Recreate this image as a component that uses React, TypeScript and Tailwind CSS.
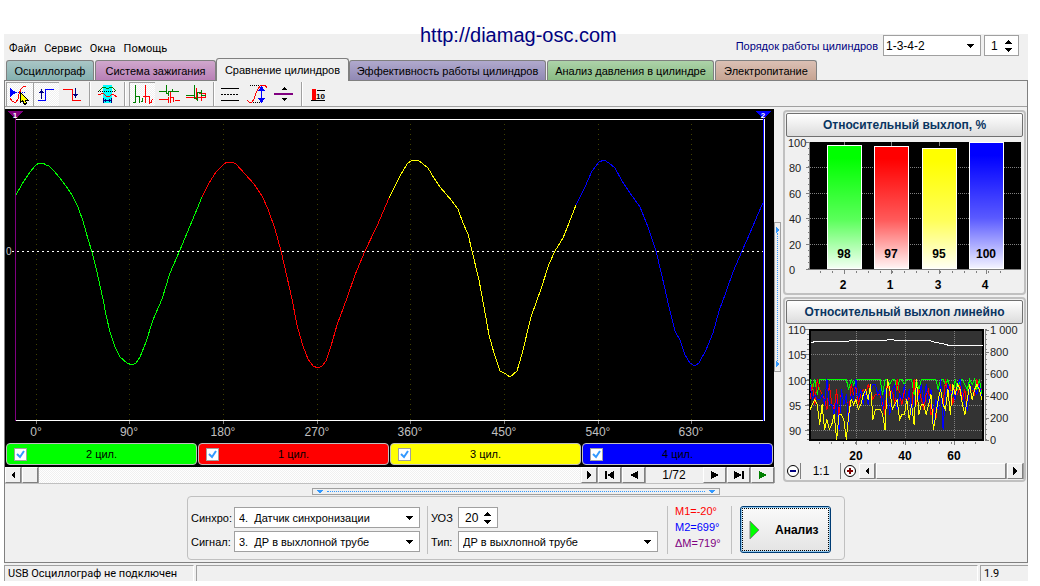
import { type ReactNode, useState } from "react";

type Point = [number, number];

const tabs = [
  { label: "Осциллограф", width: "w-[88px]", color: "from-[#a9c6c6] to-[#84b0af]" },
  { label: "Система зажигания", width: "w-[121px]", color: "from-[#d0a7cd] to-[#b880b6]" },
  { label: "Сравнение цилиндров", width: "w-[133px]", color: "" },
  { label: "Эффективность работы цилиндров", width: "w-[197px]", color: "from-[#b0a9cd] to-[#9189b4]" },
  { label: "Анализ давления в цилиндре", width: "w-[167px]", color: "from-[#add3a9] to-[#8abb84]" },
  { label: "Электропитание", width: "w-[102px]", color: "from-[#dbc0b4] to-[#c6a493]" },
];

const waves: { color: string; points: Point[] }[] = [
  {
    color: "#00ff00",
    points: [
      [16, 195], [22, 184], [26, 178], [30, 172], [36, 165], [39, 163], [43, 163], [46, 165], [49, 166],
      [53, 170], [60, 178], [66, 186], [72, 195], [78, 207], [83, 221], [88, 239], [92, 252],
      [97, 272], [103, 299], [106, 315], [110, 332], [115, 347], [120, 357], [127, 363], [132, 365],
      [136, 363], [140, 357], [146, 342], [153, 320], [162, 299], [170, 273], [180, 250],
      [190, 226], [202, 197],
    ],
  },
  {
    color: "#ff0000",
    points: [
      [202, 197], [209, 183], [216, 172], [223, 165], [227, 162], [232, 162], [236, 164], [245, 174], [254, 184],
      [262, 196], [268, 209], [275, 229], [281, 251], [287, 277], [292, 299], [297, 325], [303, 346],
      [308, 359], [313, 366], [318, 368], [322, 366], [326, 361], [331, 346], [337, 325], [347, 298],
      [355, 275], [365, 251], [377, 226], [389, 198],
    ],
  },
  {
    color: "#ffff00",
    points: [
      [389, 198], [400, 176], [407, 164], [412, 160], [418, 160], [428, 168], [434, 178], [440, 187],
      [452, 201], [458, 209], [463, 223], [468, 234], [472, 251], [479, 280], [484, 307], [489, 335],
      [494, 353], [500, 371], [506, 374], [510, 377], [517, 371], [522, 354], [531, 317], [541, 289],
      [549, 264], [555, 251], [563, 238], [569, 223], [576, 205],
    ],
  },
  {
    color: "#0000ff",
    points: [
      [576, 205], [585, 187], [592, 171], [599, 162], [604, 160], [609, 163], [615, 168], [622, 181],
      [630, 193], [640, 207], [648, 227], [656, 251], [662, 276], [669, 307], [675, 331], [680, 340],
      [685, 355], [690, 363], [695, 366], [699, 363], [706, 350], [713, 333], [719, 311], [726, 292],
      [733, 272], [742, 251], [750, 233], [758, 214], [763, 203],
    ],
  },
];

const degrees = [
  { x: 36, label: "0°" },
  { x: 129, label: "90°" },
  { x: 223, label: "180°" },
  { x: 317, label: "270°" },
  { x: 410, label: "360°" },
  { x: 504, label: "450°" },
  { x: 598, label: "540°" },
  { x: 691, label: "630°" },
];

const cylinders = [
  { name: "2 цил.", color: "bg-[#00ff00]" },
  { name: "1 цил.", color: "bg-[#ff0000]" },
  { name: "3 цил.", color: "bg-[#ffff00]" },
  { name: "4 цил.", color: "bg-[#0000ff]" },
];

const exhaust = [
  { id: "2", value: 98, color: "#00ff00", x: 827, top: 145 },
  { id: "1", value: 97, color: "#ff0000", x: 874, top: 146 },
  { id: "3", value: 95, color: "#ffff00", x: 922, top: 148 },
  { id: "4", value: 100, color: "#0000ff", x: 969, top: 142 },
];

const history = [
  {
    color: "#00ff00",
    values: [
      100, 98, 100, 97, 100, 100, 100, 100, 100, 100, 100, 100, 100, 100, 100, 100, 98, 100, 99, 100, 100, 100,
      100, 100, 100, 100, 100, 100, 100, 100, 97, 100, 100, 99, 100, 100, 98, 100, 100, 99, 100, 100, 100, 97,
      100, 98, 100, 100, 100, 100, 100, 100, 100, 98, 100, 100, 99, 100, 98, 97, 100, 98, 100, 100, 99, 98,
      100, 99, 100, 98, 100, 97,
    ],
  },
  {
    color: "#ff0000",
    values: [
      96, 99, 95, 100, 98, 97, 96, 94, 99, 95, 94, 98, 92, 98, 95, 97, 92, 99, 97, 99, 95, 97, 98, 97, 99, 98,
      96, 97, 97, 97, 95, 93, 100, 97, 98, 95, 100, 97, 95, 98, 95, 97, 94, 100, 95, 98, 96, 94, 97, 98, 93,
      94, 92, 96, 98, 95, 100, 97, 99, 95, 98, 97, 99, 96, 98, 94, 99, 98, 97, 100, 98, 98,
    ],
  },
  {
    color: "#0000ff",
    values: [
      99, 96, 97, 96, 96, 97, 95, 100, 95, 95, 93, 96, 90, 98, 95, 97, 91, 97, 96, 100, 96, 98, 95, 98, 95, 98,
      99, 99, 97, 98, 94, 98, 96, 93, 98, 99, 94, 97, 96, 99, 95, 98, 93, 96, 98, 96, 99, 95, 99, 95, 98, 91,
      96, 94, 100, 90, 97, 99, 97, 98, 96, 99, 100, 97, 95, 94, 99, 98, 98, 97, 99, 96,
    ],
  },
  {
    color: "#ffff00",
    values: [
      94, 95, 96, 95, 91, 95, 90, 92, 90, 91, 93, 88, 93, 93, 92, 88, 93, 96, 95, 96, 94, 95, 97, 98, 96, 99,
      92, 94, 94, 94, 93, 90, 100, 98, 94, 95, 96, 92, 93, 93, 96, 92, 95, 91, 100, 93, 95, 95, 93, 95, 97,
      90, 93, 96, 98, 95, 94, 98, 93, 99, 97, 99, 98, 95, 93, 96, 99, 96, 98, 99, 98, 96,
    ],
  },
];

const rpm: Point[] = [
  [811, 343], [816, 341], [849, 341], [852, 340], [887, 340], [891, 339], [897, 341], [903, 340], [928, 340],
  [934, 342], [944, 344], [951, 346], [955, 345], [961, 346], [970, 345], [980, 346], [983, 345],
];

const toPoints = (points: Point[]) => points.map((p) => p.join(",")).join(" ");

function Glyph({ box, d, fill = "#000" }: { box: string; d: string; fill?: string }) {
  const [, , w, h] = box.split(" ");
  return (
    <svg width={w} height={h} viewBox={box} shapeRendering="crispEdges" aria-hidden="true">
      <path d={d} fill={fill} />
    </svg>
  );
}

function ClassicButton({ label, width, children }: { label: string; width: string; children?: ReactNode }) {
  return (
    <button
      aria-label={label}
      className={`flex h-4 shrink-0 items-center justify-center border border-t-white border-l-white border-r-[#808080] border-b-[#808080] bg-[#f0f0f0] shadow-[1px_0_0_#a0a0a0] ${width}`}
    >
      {children}
    </button>
  );
}

function ToolButton({
  label,
  box,
  pressed,
  children,
}: {
  label: string;
  box: string;
  pressed?: boolean;
  children: ReactNode;
}) {
  const [, , w, h] = box.split(" ");
  return (
    <button
      aria-label={label}
      aria-pressed={pressed}
      className={
        pressed
          ? "bg-[repeating-conic-gradient(#fff_0_25%,#f0f0f0_0_50%)] bg-[size:2px_2px] shadow-[inset_1px_1px_0_#a0a0a0]"
          : ""
      }
    >
      <svg width={w} height={h} viewBox={box} fill="none" shapeRendering="crispEdges">
        {children}
      </svg>
    </button>
  );
}

function ToolSeparator() {
  return <div className="h-6 w-0.5 border-l border-[#a0a0a0] bg-white" />;
}

function Toolbar() {
  return (
    <div className="flex h-[26px] items-end border-b border-[#a0a0a0] bg-[#f0f0f0] pl-px">
      <ToolButton label="Измерение" box="6 82 27 24" pressed>
        <path d="M10 88v9l6-4.500z" fill="#0000ff" />
        <path d="M16 92.500h10" stroke="#0000ff" strokeDasharray="1 1" />
        <path d="M10 98l2 3 2 1h2l2-3 1-5 2-5 2-2 3-1" stroke="#ff0000" />
        <path d="M20.500 92.500v10l2-2 2 4 2-1-1.500-3.500h3z" fill="#ffff00" stroke="#000" />
      </ToolButton>
      <ToolButton label="Фронт вверх" box="33 82 26 24" pressed>
        <path d="M38 100.500h7.500v-11h8.500" stroke="#0000ff" />
        <path d="M41.500 99v-9" stroke="#000080" />
        <path d="M39 93h5l-2.500-4z" fill="#000080" />
      </ToolButton>
      <ToolButton label="Фронт вниз" box="59 82 27 24">
        <path d="M63 89.500h9.500v10.500h8" stroke="#ff0000" />
        <path d="M75.500 88v9" stroke="#000080" />
        <path d="M73 94h5l-2.500 4z" fill="#000080" />
      </ToolButton>
      <div className="w-[3px]" />
      <ToolSeparator />
      <ToolButton label="Диапазон" box="91 82 33 24">
        <path d="M103 85h9v18h-9z" fill="#00ffff" />
        <path d="M98 92l3-3 2-2h2l2 2 2-1 2-1 2 1 3 3" stroke="#008000" />
        <path d="M98 91.500h18" stroke="#000" strokeDasharray="1 1" />
        <path d="M98 95l3-1 2-1 3 3 2 1 2-1 2-2 2 1 3 2" stroke="#ff0000" />
        <path d="M103.500 98v5M111.500 98v5M104 100.500h7" stroke="#000080" />
        <path d="M104 100.500l2-2v4zM111 100.500l-2-2v4z" fill="#000080" />
      </ToolButton>
      <ToolSeparator />
      <div className="w-[3px]" />
      <ToolButton label="Последовательно" box="129 82 26 24" pressed>
        <path d="M135.500 85v18M133 102.500h3M136 96.500h4M139.500 96v7M139 98.500h1M141 101.500h2M142.500 98v4" stroke="#008000" />
        <path d="M145.500 85v18M143 96.500h7M149.500 96v8M150 102.500h1M151.500 100v3M152 99.500h1" stroke="#ff0000" />
      </ToolButton>
      <ToolButton label="Раздельно" box="155 82 27 24">
        <path d="M159 91.500h7M166.500 85v9M167 93.500h2M168.500 91v5M169 91.500h4M172.500 89v3M172 91.500h7" stroke="#008000" />
        <path d="M159 99.500h9M168.500 97v6M170.500 92v11M170 97.500h4M173.500 97v5M175 100.500h5" stroke="#ff0000" />
      </ToolButton>
      <ToolButton label="Наложение" box="182 82 28 24">
        <path d="M186 97.500h20M196.500 88v12M201.500 93v8M199 93.500h6M205.500 93v4" stroke="#ff0000" />
        <path d="M186 95.500h9M194.500 85v14M195 98.500h2M197.500 92v9M198 92.500h4M201.500 90v6M202 95.500h4" stroke="#008000" />
      </ToolButton>
      <div className="w-[3px]" />
      <ToolSeparator />
      <ToolButton label="Сетка" box="216 82 30 24">
        <path d="M222 88.500h18M222 100.500h18" stroke="#000" />
        <path d="M222 94.500h18" stroke="#000" strokeDasharray="2 1" />
      </ToolButton>
      <ToolButton label="Амплитуда" box="246 82 26 24">
        <path d="M251 85.500h10M252 102.500h10" stroke="#000" strokeDasharray="1 1" />
        <path d="M248 100l2 2h3l2-3 2-6 2-4 2-3 2-1h3l2 3" stroke="#ff0000" />
        <path d="M262.500 89v11" stroke="#0000ff" />
        <path d="M259 91h7l-3.500-5zM259 98h7l-3.500 5z" fill="#0000ff" />
      </ToolButton>
      <ToolButton label="По центру" box="272 82 28 24">
        <path d="M275 93h19v2h-19z" fill="#800080" />
        <path d="M282 90h6l-3-3zM282 98h6l-3 3z" fill="#000" />
      </ToolButton>
      <div className="w-0.5" />
      <ToolSeparator />
      <ToolButton label="Усреднение" box="304 82 30 24">
        <path d="M313 89h4v11h-4z" fill="#ff0000" />
        <path d="M312 100.500h14M318 90.500h8" stroke="#000" />
        <text x="317" y="99" fontSize="8" fontWeight="700" fill="#000">
          10
        </text>
      </ToolButton>
    </div>
  );
}

function ScopePlot() {
  return (
    <svg viewBox="5 109 769 333" className="block h-auto w-full bg-black" shapeRendering="crispEdges">
      {degrees.map((d) => (
        <g key={d.label}>
          <path d={`M${d.x + 0.5} 124V420`} stroke="#404000" strokeDasharray="1 4" />
          <path d={`M${d.x + 0.5} 421v3`} stroke="#808080" />
          <text x={d.x} y="436" fontSize="12" textAnchor="middle" fill="#c0c0c0">
            {d.label}
          </text>
        </g>
      ))}
      <text x="6" y="255" fontSize="10" fill="#c0c0c0">
        0
      </text>
      <path d="M12 251.500H763" stroke="#fff" strokeDasharray="2 3" />
      <path d="M16 119.500H764.500V420.500H16" fill="none" stroke="#fff" />
      {waves.map((w) => (
        <polyline key={w.color} points={toPoints(w.points)} fill="none" stroke={w.color} />
      ))}
      <path d="M15.500 118V421" stroke="#800080" />
      <path d="M763.500 118V421" stroke="#0000ff" />
      <path d="M8 111h15l-7.500 8z" fill="#800080" />
      <path d="M756 111h15l-7.500 8z" fill="#0000ff" />
      <text x="15" y="118" fontSize="8" fontWeight="700" textAnchor="middle" fill="#fff">
        1
      </text>
      <text x="763" y="118" fontSize="8" fontWeight="700" textAnchor="middle" fill="#fff">
        2
      </text>
    </svg>
  );
}

function CylinderToggles() {
  return (
    <div className="grid grid-cols-4 gap-px bg-black pt-px pr-px pb-0.5 pl-px">
      {cylinders.map((c) => (
        <label
          key={c.name}
          className={`grid h-[22px] grid-cols-[13px_1fr_13px] items-center rounded-sm border border-[#c0c0c0] px-[7px] text-center ${c.color}`}
        >
          <span className="relative block size-[13px]">
            <input
              type="checkbox"
              defaultChecked
              className="peer block size-[13px] appearance-none border border-[#a0a0a0] bg-white"
            />
            <svg
              viewBox="0 0 13 13"
              className="pointer-events-none absolute inset-0 hidden peer-checked:block"
              fill="none"
            >
              <path d="M3 6l3 3 4-6" stroke="#3399ff" strokeWidth="2" />
            </svg>
          </span>
          {c.name}
        </label>
      ))}
    </div>
  );
}

function ScopeScroll() {
  return (
    <div className="flex h-[17px] gap-px border-b border-[#c0c0c0]">
      <ClassicButton label="Влево" width="w-4">
        <Glyph box="0 0 5 8" d="M0 4l4-4v8z" />
      </ClassicButton>
      <ClassicButton label="Бегунок" width="w-4" />
      <div className="flex-1 bg-[repeating-conic-gradient(#fff_0_25%,#f0f0f0_0_50%)] bg-[size:2px_2px]" />
      <ClassicButton label="Вправо" width="w-4">
        <Glyph box="0 0 5 8" d="M4 4l-4-4v8z" />
      </ClassicButton>
      <ClassicButton label="Первый" width="w-[23px]">
        <Glyph box="0 0 10 8" d="M0 0h2v8h-2zM2 4l7-4v8z" />
      </ClassicButton>
      <ClassicButton label="Назад" width="w-[23px]">
        <Glyph box="0 0 8 8" d="M0 4l8-4v8z" />
      </ClassicButton>
      <output className="w-14 text-center text-xs leading-4">1/72</output>
      <ClassicButton label="Вперёд" width="w-[23px]">
        <Glyph box="0 0 8 8" d="M8 4l-8-4v8z" />
      </ClassicButton>
      <ClassicButton label="Последний" width="w-[23px]">
        <Glyph box="0 0 10 8" d="M8 0h2v8h-2zM8 4l-8-4v8z" />
      </ClassicButton>
      <ClassicButton label="Пуск" width="w-[23px]">
        <Glyph box="0 0 8 8" d="M8 4l-8-4v8z" fill="#008000" />
      </ClassicButton>
    </div>
  );
}

function ChartPanel({ title, children }: { title: string; children: ReactNode }) {
  return (
    <section className="rounded-[4px] border-2 border-[#c0c0c0] pt-px">
      <button className="mx-px flex h-6 w-[calc(100%-2px)] items-center justify-center rounded-[2px] border border-[#707070] bg-linear-to-b from-white to-[#dcdcdc] text-xs font-bold text-[#0a3561]">
        {title}
      </button>
      {children}
    </section>
  );
}

function ExhaustBars() {
  return (
    <svg viewBox="785 137 239 156" className="block h-auto w-full overflow-visible" shapeRendering="crispEdges">
      <path d="M810 142h211v128h-211z" fill="#000" />
      {[0, 20, 40, 60, 80, 100].map((v) => {
        const y = Math.round(269 - v * 1.27);
        return (
          <g key={v}>
            {v > 0 && v < 100 && <path d={`M810 ${y + 0.5}h211`} stroke="#808080" strokeDasharray="1 1" />}
            <path d={`M806 ${y + 0.5}h4`} stroke="#808080" />
            <text x={v === 100 ? 788 : 789} y={y + 5} fontSize="11" fill="#222">
              {v}
            </text>
          </g>
        );
      })}
      <path d="M809.500 142v128M808 269.500h213" stroke="#808080" />
      <path d="M808.500 142v127" stroke="#808080" strokeDasharray="1 5" />
      <path d="M820 271.500h192" stroke="#808080" strokeWidth="2" strokeDasharray="1 11" />
      {exhaust.map((b) => (
        <g key={b.id}>
          <linearGradient id={`bar-${b.id}`} x1="0" y1="0" x2="0" y2="1">
            <stop offset="0.1" stopColor={b.color} />
            <stop offset="0.6" stopColor={b.color} stopOpacity="0.65" />
            <stop offset="1" stopColor={b.color} stopOpacity="0.05" />
          </linearGradient>
          <path d={`M${b.x + 17.5} 142v4M${b.x + 17.5} 270v4`} stroke="#808080" />
          <rect x={b.x} y={b.top} width="35" height={269 - b.top} fill="#fff" />
          <rect x={b.x + 1} y={b.top + 1} width="33" height={267 - b.top} fill={`url(#bar-${b.id})`} />
          <text x={b.x + 17} y="258" fontSize="12" fontWeight="700" textAnchor="middle">
            {b.value}
          </text>
          <text x={b.x + 16} y="289" fontSize="12" fontWeight="700" textAnchor="middle">
            {b.id}
          </text>
        </g>
      ))}
    </svg>
  );
}

function ExhaustHistory() {
  return (
    <svg viewBox="785 324 239 138" className="block h-auto w-full overflow-visible" shapeRendering="crispEdges">
      <rect x="810" y="330" width="173" height="110" fill="#333" stroke="#000" strokeWidth="2" />
      {[110, 105, 100, 95, 90].map((v) => {
        const y = Math.round(329 + (110 - v) * 5.05);
        return (
          <g key={v}>
            {v < 110 && <path d={`M811 ${y + 0.5}h171`} stroke="#808080" strokeDasharray="1 1" />}
            <path d={`M805 ${y + 0.5}h4`} stroke="#808080" />
            <text x={v < 100 ? 789 : 788} y={y + 5} fontSize="11" fill="#222">
              {v}
            </text>
          </g>
        );
      })}
      <path d="M808 329v112M986 329v112" stroke="#808080" strokeWidth="2" strokeDasharray="1 4" />
      <path d="M985.500 329v112" stroke="#808080" />
      {["0", "200", "400", "600", "800", "1 000"].map((label, i) => (
        <g key={label}>
          <path d={`M985 ${440.5 - i * 22}h4`} stroke="#808080" />
          <text x="990" y={444 - i * 22} fontSize="11" fill="#222">
            {label}
          </text>
        </g>
      ))}
      {[20, 40, 60].map((v) => {
        const x = 807 + Math.round(v * 2.45);
        return (
          <g key={v}>
            <path d={`M${x + 0.5} 331v108`} stroke="#808080" strokeDasharray="1 1" />
            <path d={`M${x + 0.5} 441v4`} stroke="#808080" />
            <text x={x} y="460" fontSize="12" fontWeight="700" textAnchor="middle">
              {v}
            </text>
          </g>
        );
      })}
      <path d="M819 442.500h165" stroke="#808080" strokeWidth="2" strokeDasharray="1 11" />
      {history.map((s) => (
        <polyline
          key={s.color}
          points={toPoints(s.values.map((v, i): Point => [810 + i * 2.42, 329.5 + (110 - v) * 5]))}
          fill="none"
          stroke={s.color}
        />
      ))}
      <polyline points={toPoints(rpm)} fill="none" stroke="#fff" />
    </svg>
  );
}

function ZoomBar() {
  return (
    <div className="flex h-[18px] items-center gap-px pr-px">
      <button aria-label="Уменьшить" className="flex h-4 w-4 items-center justify-center border-r border-[#808080]">
        <svg width="14" height="14" viewBox="0 0 14 14" fill="none">
          <circle cx="7" cy="7" r="5.500" fill="#fff" stroke="#000" />
          <path d="M4 7h6" stroke="#000080" strokeWidth="2" />
        </svg>
      </button>
      <button className="h-4 w-[39px] border-r border-[#808080] text-center text-xs leading-4">1:1</button>
      <button aria-label="Увеличить" className="flex h-4 w-4 items-center justify-center">
        <svg width="14" height="14" viewBox="0 0 14 14" fill="none">
          <circle cx="7" cy="7" r="5.500" fill="#fff" stroke="#000" />
          <path d="M4 7h6M7 4v6" stroke="#800000" strokeWidth="2" />
        </svg>
      </button>
      <ClassicButton label="Влево" width="w-4">
        <Glyph box="0 0 5 8" d="M0 4l4-4v8z" />
      </ClassicButton>
      <ClassicButton label="Бегунок" width="flex-1" />
      <ClassicButton label="Вправо" width="w-4">
        <Glyph box="0 0 5 8" d="M4 4l-4-4v8z" />
      </ClassicButton>
    </div>
  );
}

function Dropdown({
  id,
  options,
  width,
  pad = "pl-1",
}: {
  id: string;
  options: string[];
  width: string;
  pad?: string;
}) {
  return (
    <span className={`relative block ${width}`}>
      <select
        id={id}
        className={`block h-[21px] w-full appearance-none border border-[#a0a0a0] bg-white pr-5 ${pad}`}
      >
        {options.map((o) => (
          <option key={o}>{o}</option>
        ))}
      </select>
      <svg
        width="8"
        height="4"
        viewBox="0 0 8 4"
        className="pointer-events-none absolute top-[9px] right-[7px]"
        shapeRendering="crispEdges"
      >
        <path d="M0 0h8l-4 4z" />
      </svg>
    </span>
  );
}

function Spinner({ id, initial, width, label }: { id: string; initial: number; width: string; label?: string }) {
  const [value, setValue] = useState(initial);

  return (
    <span className={`flex h-[21px] items-center border border-[#a0a0a0] bg-white ${width}`}>
      <input
        id={id}
        aria-label={label}
        value={value}
        onChange={(e) => setValue(Number(e.target.value) || 0)}
        className="w-full min-w-0 flex-1 bg-transparent pl-1.5 text-xs"
      />
      <span className="flex w-3.5 flex-col gap-1 pr-1">
        <button aria-label="Больше" onClick={() => setValue(value + 1)}>
          <Glyph box="0 0 8 4" d="M0 4h8l-4-4z" />
        </button>
        <button aria-label="Меньше" onClick={() => setValue(value - 1)}>
          <Glyph box="0 0 8 4" d="M0 0h8l-4 4z" />
        </button>
      </span>
    </span>
  );
}

function SettingsPanel() {
  return (
    <div className="mx-auto mb-0.5 flex h-16 w-[658px] items-center rounded-[4px] border border-[#c0c0c0] pt-[3px] pl-[3px]">
      <div className="grid grid-cols-[43px_186px] items-center gap-y-[3px]">
        <label htmlFor="sync">Синхро:</label>
        <Dropdown id="sync" width="w-full" options={["4.\u00a0\u00a0Датчик синхронизации"]} />
        <label htmlFor="signal">Сигнал:</label>
        <Dropdown id="signal" width="w-full" options={["3.\u00a0\u00a0ДР в выхлопной трубе"]} />
      </div>
      <div className="ml-[7px] h-12 w-px bg-[#c0c0c0]" />
      <div className="ml-[3px] grid grid-cols-[27px_200px] items-center gap-y-[3px]">
        <label htmlFor="advance">УОЗ</label>
        <Spinner id="advance" initial={20} width="w-10" />
        <label htmlFor="type">Тип:</label>
        <Dropdown id="type" width="w-full" options={["ДР в выхлопной трубе"]} />
      </div>
      <div className="ml-[9px] h-12 w-px bg-[#c0c0c0]" />
      <div className="w-[63px] self-start pt-[3px] pl-[7px]">
        <p className="text-[#ff0000]">M1=-20°</p>
        <p className="text-[#0000ff]">M2=699°</p>
        <p className="text-[#800080]">ΔM=719°</p>
      </div>
      <div className="h-12 w-px bg-[#c0c0c0]" />
      <button className="ml-2 flex h-[47px] w-[91px] items-center gap-[15px] rounded-[3px] border border-[#003c74] bg-linear-to-b from-[#fafafa] to-[#e4e4e4] pl-2 text-xs font-bold shadow-[inset_0_0_0_1px_#8fc7ee] outline-1 -outline-offset-3 outline-dotted outline-black">
        <svg width="11" height="20" viewBox="0 0 11 20">
          <path d="M1 1v18l9-9z" fill="#00ff00" stroke="#808080" />
        </svg>
        Анализ
      </button>
    </div>
  );
}

export default function App() {
  const [activeTab, setActiveTab] = useState(2);

  return (
    <div className="relative bg-white pt-[34px] pr-3 pb-[5px] pl-1 font-['Liberation_Sans',sans-serif] text-[11px] leading-4 text-black">
      <a href="http://diamag-osc.com" className="absolute top-[23px] left-[420px] text-xl leading-6 text-[#000080]">
        http://diamag-osc.com
      </a>

      <div className="bg-[#f0f0f0]">
        {/* Menu and firing order */}
        <header className="flex h-6 justify-between">
          <nav className="flex gap-2 pt-[5px] pl-[5px] font-['Roboto','Noto_Sans',sans-serif]">
            <button>Файл</button>
            <button>Сервис</button>
            <button>Окна</button>
            <button>Помощь</button>
          </nav>
          <div className="flex items-start gap-[3px] pt-px pr-[9px]">
            <label htmlFor="order" className="pt-[3px] pr-0.5 text-[#000080]">
              Порядок работы цилиндров
            </label>
            <Dropdown id="order" width="w-[98px] text-xs" pad="pl-0.5" options={["1-3-4-2"]} />
            <Spinner id="cylinder" label="Цилиндр" initial={1} width="w-[35px]" />
          </div>
        </header>

        {/* Tabs */}
        <div role="tablist" className="flex items-end gap-px pl-0.5">
          {tabs.map((tab, i) => (
            <button
              key={tab.label}
              role="tab"
              aria-selected={activeTab === i}
              onClick={() => setActiveTab(i)}
              className={`shrink-0 rounded-t-[3px] border border-b-0 border-[#808080] whitespace-nowrap ${tab.width} ${
                activeTab === i ? "relative -mx-px -mb-px h-[23px] bg-[#f0f0f0]" : `h-5 bg-linear-to-b ${tab.color}`
              }`}
            >
              {tab.label}
            </button>
          ))}
        </div>

        <main className="border border-[#808080]">
          <Toolbar />

          <div className="mt-0.5 flex">
            <div className="min-w-0 flex-1">
              <ScopePlot />
              <CylinderToggles />
              <ScopeScroll />
            </div>

            {/* Vertical splitter */}
            <div className="flex w-[9px] items-center">
              <div className="flex h-[150px] w-[7px] flex-col items-center justify-between border border-[#a0a0a0] py-1">
                <Glyph box="0 0 4 6" d="M0 0v6l4-3z" fill="#3399ff" />
                <div className="flex-1 border-l border-dotted border-[#3399ff]" />
                <Glyph box="0 0 4 6" d="M0 0v6l4-3z" fill="#3399ff" />
              </div>
            </div>

            <aside className="mr-px flex w-[243px] flex-col gap-0.5 pt-px">
              <ChartPanel title="Относительный выхлоп, %">
                <ExhaustBars />
              </ChartPanel>
              <ChartPanel title="Относительный выхлоп линейно">
                <ExhaustHistory />
                <ZoomBar />
              </ChartPanel>
            </aside>
          </div>

          {/* Horizontal splitter */}
          <div className="mx-auto mt-1 mb-px flex h-[7px] w-[408px] items-center gap-1 border border-[#a0a0a0] px-1">
            <Glyph box="0 0 6 4" d="M0 0h6l-3 4z" fill="#3399ff" />
            <div className="flex-1 border-t border-dotted border-[#3399ff]" />
            <Glyph box="0 0 6 4" d="M0 0h6l-3 4z" fill="#3399ff" />
          </div>

          <SettingsPanel />
        </main>

        <footer className="flex h-[18px] gap-0.5 pt-0.5 font-['Roboto','Noto_Sans',sans-serif]">
          <div className="w-[190px] border-t border-r border-l border-[#a0a0a0] border-r-white pl-[3px]">
            USB Осциллограф не подключен
          </div>
          <div className="flex-1 border-t border-r border-l border-[#a0a0a0] border-r-white" />
          <div className="w-12 border-t border-l border-[#a0a0a0] pl-[3px]">1.9</div>
        </footer>
      </div>
    </div>
  );
}
